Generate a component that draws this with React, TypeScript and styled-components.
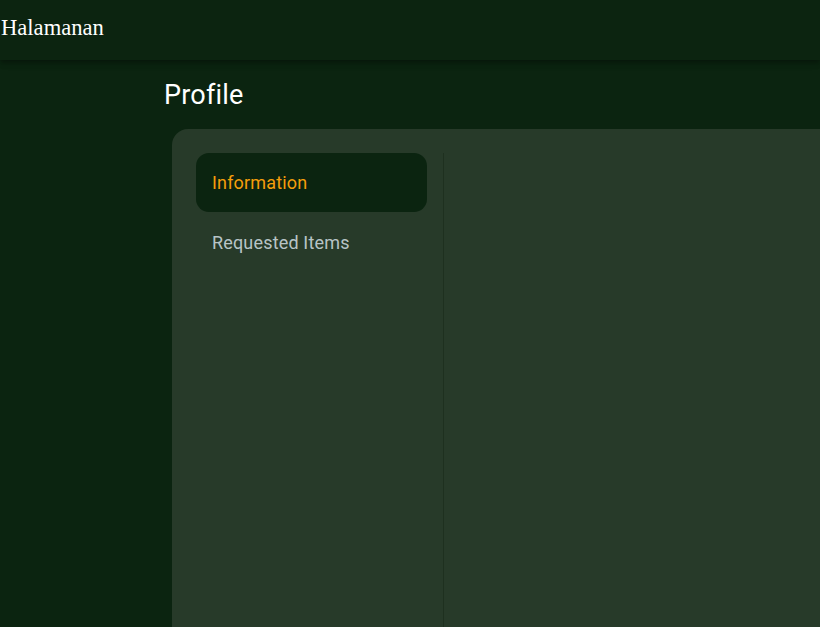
import React from "react";
import styled, { createGlobalStyle } from "styled-components";

const Global = createGlobalStyle`
  html, body { margin: 0; padding: 0; background: #0b2410; height: 100%; overflow: hidden; }
  #root { height: 100%; }
`;

const Page = styled.div`
  height: 627px;
  display: flex;
  flex-direction: column;
  background: #0b2410;
`;

const Header = styled.header`
  height: 60px;
  flex: none;
  display: flex;
  align-items: center;
  padding-left: 1px;
  background: #0c2410;
  box-shadow: 0 2px 4px -1px rgba(0, 0, 0, 0.2), 0 4px 5px 0 rgba(0, 0, 0, 0.14), 0 1px 10px 0 rgba(0, 0, 0, 0.12);
  position: relative;
  z-index: 1;
`;

const Brand = styled.div`
  font-family: "Liberation Serif", "Times New Roman", serif;
  font-size: 22.6px;
  color: #ffffff;
  margin-top: -4px;
`;

const Main = styled.main`
  flex: 1;
  display: flex;
  flex-direction: column;
  padding-left: 164px;
  min-height: 0;
`;

const Title = styled.h1`
  margin: 17px 0 0 0;
  font-family: Roboto, "Noto Sans", sans-serif;
  font-weight: 400;
  font-size: 27px;
  letter-spacing: 0.2px;
  line-height: 36px;
  color: #ffffff;
`;

const Card = styled.section`
  margin: 16px 0 0 8px;
  flex: 1;
  display: flex;
  background: #273a29;
  border-radius: 16px 0 0 0;
  padding: 24px 0 0 24px;
  gap: 16px;
  min-height: 0;
`;

const Nav = styled.nav`
  width: 231px;
  display: flex;
  flex-direction: column;
  gap: 1px;
`;

const NavItem = styled.div<{ $active?: boolean }>`
  height: 59px;
  display: flex;
  align-items: center;
  padding-left: 16px;
  border-radius: 13px;
  font-family: Roboto, "Noto Sans", sans-serif;
  font-size: 18px;
  letter-spacing: 0.00938em;
  background: ${(p) => (p.$active ? "#0b2410" : "transparent")};
  color: ${(p) => (p.$active ? "#f59e0b" : "#b7c4c6")};
`;

const Divider = styled.div`
  width: 1px;
  background: #1e301f;
  align-self: stretch;
`;

const Content = styled.div`
  flex: 1;
`;

export default function App() {
  return (
    <>
      <Global />
      <Page>
        <Header>
          <Brand>Halamanan</Brand>
        </Header>
        <Main>
          <Title>Profile</Title>
          <Card>
            <Nav>
              <NavItem $active>Information</NavItem>
              <NavItem>Requested Items</NavItem>
            </Nav>
            <Divider />
            <Content />
          </Card>
        </Main>
      </Page>
    </>
  );
}
